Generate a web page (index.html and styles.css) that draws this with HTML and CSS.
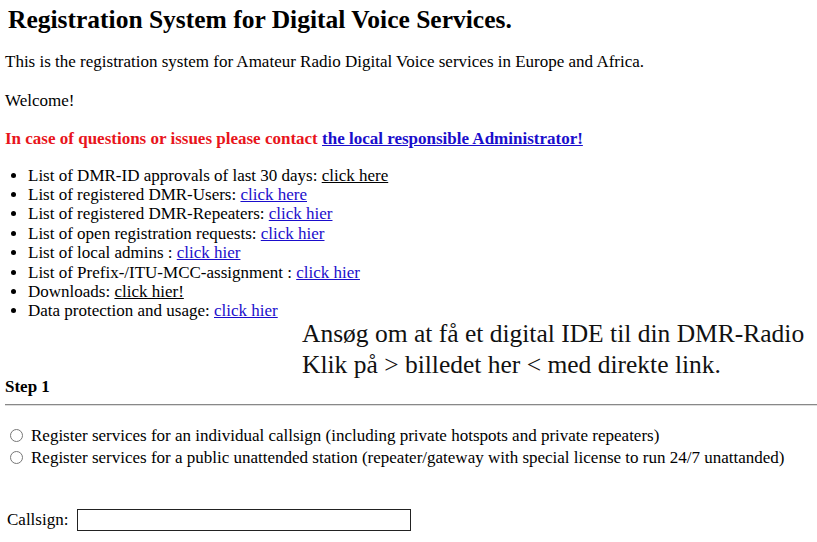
FILE: index.html
```html
<!DOCTYPE html>
<html>
<head>
<meta charset="utf-8">
<link rel="stylesheet" href="styles.css">
</head>
<body>
<h1 class="title">Registration System for Digital Voice Services.</h1>
<p class="para intro">This is the registration system for Amateur Radio Digital Voice services in Europe and Africa.</p>
<p class="para">Welcome!</p>
<p class="para contact">In case of questions or issues please contact <a href="#" class="link">the local responsible Administrator!</a></p>
<ul class="menu">
  <li>List of DMR-ID approvals of last 30 days: <a href="#" class="visited">click here</a></li>
  <li>List of registered DMR-Users: <a href="#" class="link">click here</a></li>
  <li>List of registered DMR-Repeaters: <a href="#" class="link">click hier</a></li>
  <li>List of open registration requests: <a href="#" class="link">click hier</a></li>
  <li>List of local admins : <a href="#" class="link">click hier</a></li>
  <li>List of Prefix-/ITU-MCC-assignment : <a href="#" class="link">click hier</a></li>
  <li>Downloads: <a href="#" class="visited">click hier!</a></li>
  <li>Data protection and usage: <a href="#" class="link">click hier</a></li>
</ul>
<div class="banner">
  <div class="banner-line">Ansøg om at få et digital IDE til din DMR-Radio</div>
  <div class="banner-line">Klik på &gt; billedet her &lt; med direkte link.</div>
</div>
<div class="step">Step 1</div>
<hr class="rule">
<div class="options">
  <label class="option"><span class="radio"></span>Register services for an individual callsign (including private hotspots and private repeaters)</label>
  <label class="option"><span class="radio"></span>Register services for a public unattended station (repeater/gateway with special license to run 24/7 unattanded)</label>
</div>
<div class="callsign">
  <span class="cs-label">Callsign:</span>
  <span class="cs-input"></span>
</div>
</body>
</html>
```
FILE: styles.css
```css
html, body {
  margin: 0;
  padding: 0;
  background: #fff;
}
body {
  font-family: "Liberation Serif", "Times New Roman", serif;
  font-size: 17px;
  color: #000;
  padding: 0 0 0 5px;
}
.title {
  font-size: 25.5px;
  font-weight: bold;
  margin: 5px 0 0 3px;
  line-height: 30px;
}
.para {
  margin: 19px 0 0 0;
  line-height: 19.5px;
}
.intro {
  margin-top: 17px;
}
.contact {
  color: #e8141b;
  font-weight: bold;
}
.link {
  color: #1a0dcc;
  text-decoration: underline;
}
.visited {
  color: #000;
  text-decoration: underline;
}
.menu {
  margin: 17px 0 0 0;
  padding: 0 0 0 23px;
  line-height: 19.4px;
}
.banner {
  padding-left: 297px;
  font-size: 25.5px;
  line-height: 31px;
  margin-top: -3px;
  color: #111;
}
.step {
  font-size: 17px;
  font-weight: bold;
  margin-top: -3px;
  line-height: 20px;
}
.rule {
  margin: 7px 0 0 0;
  border: none;
  border-top: 1px solid #888;
  border-bottom: 1px solid #ddd;
  height: 0;
}
.options {
  margin-top: 19px;
  font-size: 17px;
  line-height: 22px;
}
.option {
  display: flex;
  align-items: center;
  white-space: nowrap;
}
.radio {
  display: inline-block;
  width: 11px;
  height: 11px;
  border: 1px solid #777;
  border-radius: 50%;
  margin: 0 8px 0 5px;
  background: #fff;
  flex: none;
}
.callsign {
  margin-top: 40px;
  display: flex;
  align-items: center;
  font-size: 17px;
  padding-left: 2px;
}
.cs-label {
  margin-right: 9px;
}
.cs-input {
  display: inline-block;
  width: 332px;
  height: 20px;
  border: 1px solid #222;
}
```
